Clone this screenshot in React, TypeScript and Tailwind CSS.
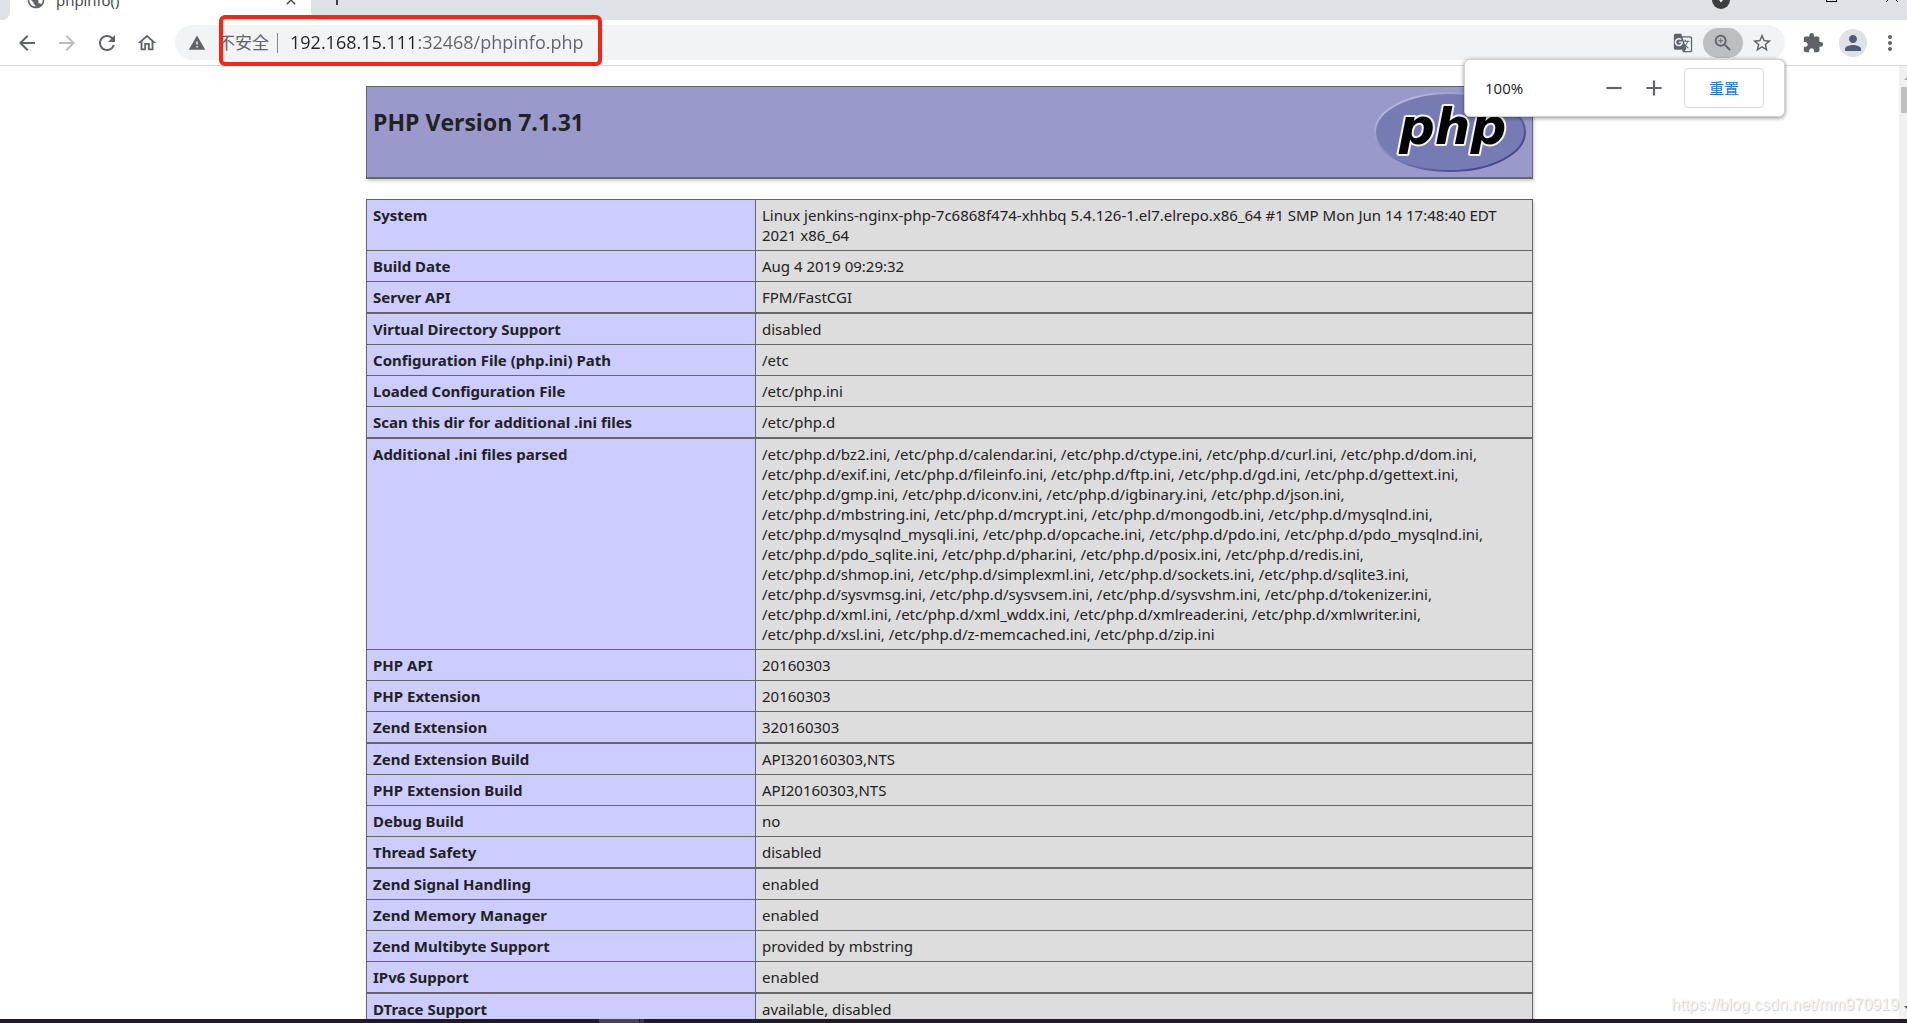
import {
  MdAdd,
  MdArrowBack,
  MdArrowForward,
  MdClose,
  MdExtension,
  MdGTranslate,
  MdMoreVert,
  MdOutlineHome,
  MdPerson,
  MdPublic,
  MdRefresh,
  MdRemove,
  MdStarBorder,
  MdWarning,
  MdZoomIn,
} from 'react-icons/md';

const iniFiles = [
  ['bz2', 'calendar', 'ctype', 'curl', 'dom'],
  ['exif', 'fileinfo', 'ftp', 'gd', 'gettext'],
  ['gmp', 'iconv', 'igbinary', 'json'],
  ['mbstring', 'mcrypt', 'mongodb', 'mysqlnd'],
  ['mysqlnd_mysqli', 'opcache', 'pdo', 'pdo_mysqlnd'],
  ['pdo_sqlite', 'phar', 'posix', 'redis'],
  ['shmop', 'simplexml', 'sockets', 'sqlite3'],
  ['sysvmsg', 'sysvsem', 'sysvshm', 'tokenizer'],
  ['xml', 'xml_wddx', 'xmlreader', 'xmlwriter'],
  ['xsl', 'z-memcached', 'zip'],
];

const iniText = iniFiles
  .map((line) => line.map((name) => `/etc/php.d/${name}.ini`).join(', '))
  .join(',\n');

const rows: [string, string][] = [
  ['System', 'Linux jenkins-nginx-php-7c6868f474-xhhbq 5.4.126-1.el7.elrepo.x86_64 #1 SMP Mon Jun 14 17:48:40 EDT\n2021 x86_64'],
  ['Build Date', 'Aug 4 2019 09:29:32'],
  ['Server API', 'FPM/FastCGI'],
  ['Virtual Directory Support', 'disabled'],
  ['Configuration File (php.ini) Path', '/etc'],
  ['Loaded Configuration File', '/etc/php.ini'],
  ['Scan this dir for additional .ini files', '/etc/php.d'],
  ['Additional .ini files parsed', iniText],
  ['PHP API', '20160303'],
  ['PHP Extension', '20160303'],
  ['Zend Extension', '320160303'],
  ['Zend Extension Build', 'API320160303,NTS'],
  ['PHP Extension Build', 'API20160303,NTS'],
  ['Debug Build', 'no'],
  ['Thread Safety', 'disabled'],
  ['Zend Signal Handling', 'enabled'],
  ['Zend Memory Manager', 'enabled'],
  ['Zend Multibyte Support', 'provided by mbstring'],
  ['IPv6 Support', 'enabled'],
  ['DTrace Support', 'available, disabled'],
];

function TabStrip() {
  return (
    <div className="flex h-5 shrink-0 items-end overflow-hidden bg-[#dee1e6] text-[#3c4043]">
      <div className="flex h-10 flex-1 items-end">
        <div className="h-10 w-[10px] bg-white">
          <div className="h-10 rounded-br-lg bg-[#dee1e6]" />
        </div>
        <div className="flex h-10 w-[301px] items-center bg-white pl-4 pr-3">
          <MdPublic className="size-5 text-[#5f6368]" />
          <span className="ml-[10px] flex-1 text-[15px]">phpinfo()</span>
          <button aria-label="Close tab">
            <MdClose className="size-4" />
          </button>
        </div>
        <div className="h-10 bg-white">
          <div className="h-10 w-2 rounded-bl-lg bg-[#dee1e6]" />
        </div>
        <button aria-label="New tab" className="flex h-10 w-9 items-center justify-center pb-1">
          <MdAdd className="size-6" />
        </button>
      </div>
      <div className="flex h-10 items-center">
        <button aria-label="Search tabs" className="mr-24 flex size-[18px] items-center justify-center rounded-full bg-[#3c4043]">
          <svg viewBox="0 0 10 10" className="size-2 fill-white">
            <path d="M1 3h8L5 8z" />
          </svg>
        </button>
        <button aria-label="Maximize" className="mb-2 mr-12 size-[11px] border border-black" />
        <button aria-label="Close window" className="mb-2 mr-2">
          <svg viewBox="0 0 14 14" className="size-[14px] stroke-black" fill="none">
            <path d="M1 1l12 12M13 1L1 13" />
          </svg>
        </button>
      </div>
    </div>
  );
}

function ZoomBubble() {
  return (
    <div className="absolute right-0 top-[34px] z-10 flex h-[58px] w-[321px] items-center rounded-md border border-[#d0d0d0] bg-white px-5 shadow-[0_1px_4px_rgba(0,0,0,0.45)]">
      <span className="flex-1 text-[15px] text-[#202124]">100%</span>
      <button aria-label="Zoom out" className="flex w-10 justify-center text-[#5f6368]">
        <MdRemove className="size-[26px]" />
      </button>
      <button aria-label="Zoom in" className="mr-[10px] flex w-10 justify-center text-[#5f6368]">
        <MdAdd className="size-[26px]" />
      </button>
      <button className="h-10 w-20 rounded border border-[#dadce0] text-[15px] text-[#1a73e8]">重置</button>
    </div>
  );
}

function Toolbar() {
  return (
    <div className="flex h-[46px] shrink-0 items-center border-b border-[#d5d7da] bg-white pl-[7px] text-[#5f6368]">
      <button aria-label="Back" className="flex w-10 justify-center">
        <MdArrowBack className="size-6" />
      </button>
      <button aria-label="Forward" className="flex w-10 justify-center text-[#babcbe]">
        <MdArrowForward className="size-6" />
      </button>
      <button aria-label="Reload" className="flex w-10 justify-center">
        <MdRefresh className="size-6" />
      </button>
      <button aria-label="Home" className="flex w-10 justify-center">
        <MdOutlineHome className="size-[22px]" />
      </button>

      {/* Address bar */}
      <div className="relative ml-2 flex h-[35px] flex-1 items-center rounded-full bg-[#f1f3f4] pl-[13px] pr-1">
        <MdWarning className="size-[18px]" />
        <label htmlFor="address" className="ml-3 text-[17px]">
          不安全
        </label>
        <span className="ml-2 h-5 w-px bg-[#80868b]" />
        <input
          id="address"
          type="text"
          defaultValue="192.168.15.111:32468/phpinfo.php"
          className="ml-3 min-w-0 flex-1 bg-[linear-gradient(90deg,#202124_125px,#5f6368_125px)] bg-clip-text text-[18px] text-transparent outline-none"
        />
        <button aria-label="Translate" className="flex w-10 justify-center">
          <MdGTranslate className="size-5" />
        </button>
        <button aria-label="Zoom" className="flex h-[30px] w-10 items-center justify-center rounded-full bg-[#bdbec0]">
          <MdZoomIn className="size-[22px]" />
        </button>
        <button aria-label="Bookmark" className="flex w-[38px] justify-center">
          <MdStarBorder className="size-[22px]" />
        </button>
        {/* Highlight around the url */}
        <div className="pointer-events-none absolute -top-[10px] left-11 h-[51px] w-[383px] rounded-md border-4 border-[#ff2116]" />
        <ZoomBubble />
      </div>

      <button aria-label="Extensions" className="ml-2 flex w-10 justify-center">
        <MdExtension className="size-[22px]" />
      </button>
      <button aria-label="Profile" className="flex w-10 justify-center">
        <span className="flex size-7 items-center justify-center rounded-full bg-[#dee1e6]">
          <MdPerson className="size-6 text-[#4d5b75]" />
        </span>
      </button>
      <button aria-label="Menu" className="flex w-[34px] justify-center">
        <MdMoreVert className="size-6" />
      </button>
    </div>
  );
}

function PhpLogo() {
  return (
    <svg viewBox="0 0 152 82" className="h-[82px] w-[152px]" role="img" aria-label="PHP logo">
      <defs>
        <linearGradient id="rim" x1="0" y1="0" x2="1" y2="1">
          <stop offset="0.15" stopColor="#b4b6dc" />
          <stop offset="0.5" stopColor="#777bb3" />
          <stop offset="0.8" stopColor="#484893" />
        </linearGradient>
      </defs>
      <ellipse cx="76" cy="41" rx="75" ry="39" fill="#777bb3" stroke="url(#rim)" strokeWidth="2" />
      <text
        x="25"
        y="53"
        className="font-['DejaVu_Sans'] text-[50px] font-bold italic"
        fill="#000"
        stroke="#f4f4f4"
        strokeWidth="4"
        strokeLinejoin="round"
        paintOrder="stroke"
      >
        php
      </text>
    </svg>
  );
}

function PhpInfo() {
  return (
    <main className="flex-1 overflow-hidden px-4 pt-5 font-['Noto_Sans',sans-serif] text-[15px] leading-5 text-[#222]">
      <div className="mx-auto flex w-full max-w-[1167px] justify-between border border-b-2 border-[#666] bg-[#9999cc] px-[6px] shadow-[1px_2px_3px_#ccc]">
        <h1 className="pt-5 font-['Open_Sans',sans-serif] text-[23px] leading-[30px] font-bold">PHP Version 7.1.31</h1>
        <div className="h-[90px] pt-1">
          <PhpLogo />
        </div>
      </div>

      <table className="mx-auto mt-5 w-full max-w-[1167px] table-fixed border-separate border-spacing-0 border border-b-0 border-[#666] shadow-[1px_2px_3px_#ccc]">
        <colgroup>
          <col className="w-[389px]" />
          <col />
        </colgroup>
        <tbody className="align-top">
          {rows.map(([name, value], i) => {
            const edge = i % 4 === 2 ? 'border-b-2' : 'border-b';
            return (
              <tr key={name}>
                <th scope="row" className={`${edge} border-r border-[#666] bg-[#ccccff] px-[6px] py-[5px] text-left font-bold`}>
                  {name}
                </th>
                <td className={`${edge} border-[#666] bg-[#dddddd] px-[6px] py-[5px] whitespace-pre-line`}>{value}</td>
              </tr>
            );
          })}
        </tbody>
      </table>
    </main>
  );
}

function Scrollbar() {
  return (
    <div className="flex w-2 shrink-0 flex-col items-end justify-between overflow-hidden bg-[#f1f1f1]">
      <div className="w-[6px]">
        <svg viewBox="0 0 6 21" className="h-[21px] w-[6px] fill-[#a3a3a3]">
          <path d="M3 14l4-4v4z" />
        </svg>
        <div className="h-[26px] bg-[#c1c1c1]" />
      </div>
      <svg viewBox="0 0 6 16" className="h-4 w-[6px] fill-[#505050]">
        <path d="M3 3h4v4z" />
      </svg>
    </div>
  );
}

export default function App() {
  return (
    <div className="flex h-screen flex-col overflow-hidden bg-white font-['Open_Sans','Noto_Sans_CJK_SC',sans-serif]">
      <TabStrip />
      <Toolbar />
      <div className="relative flex min-h-0 flex-1">
        <PhpInfo />
        <Scrollbar />
        <span className="absolute bottom-[2px] right-2 font-['Liberation_Sans',sans-serif] text-base text-[#f4f4f4] [text-shadow:1px_1px_1px_#ccc]">
          https://blog.csdn.net/mm970919
        </span>
      </div>
      {/* Desktop taskbar edge */}
      <div className="flex h-1 shrink-0 bg-[#201c26]">
        <div className="ml-[599px] w-10 bg-[#48464c]" />
        <div className="ml-px w-1 bg-[#3a383e]" />
      </div>
    </div>
  );
}
